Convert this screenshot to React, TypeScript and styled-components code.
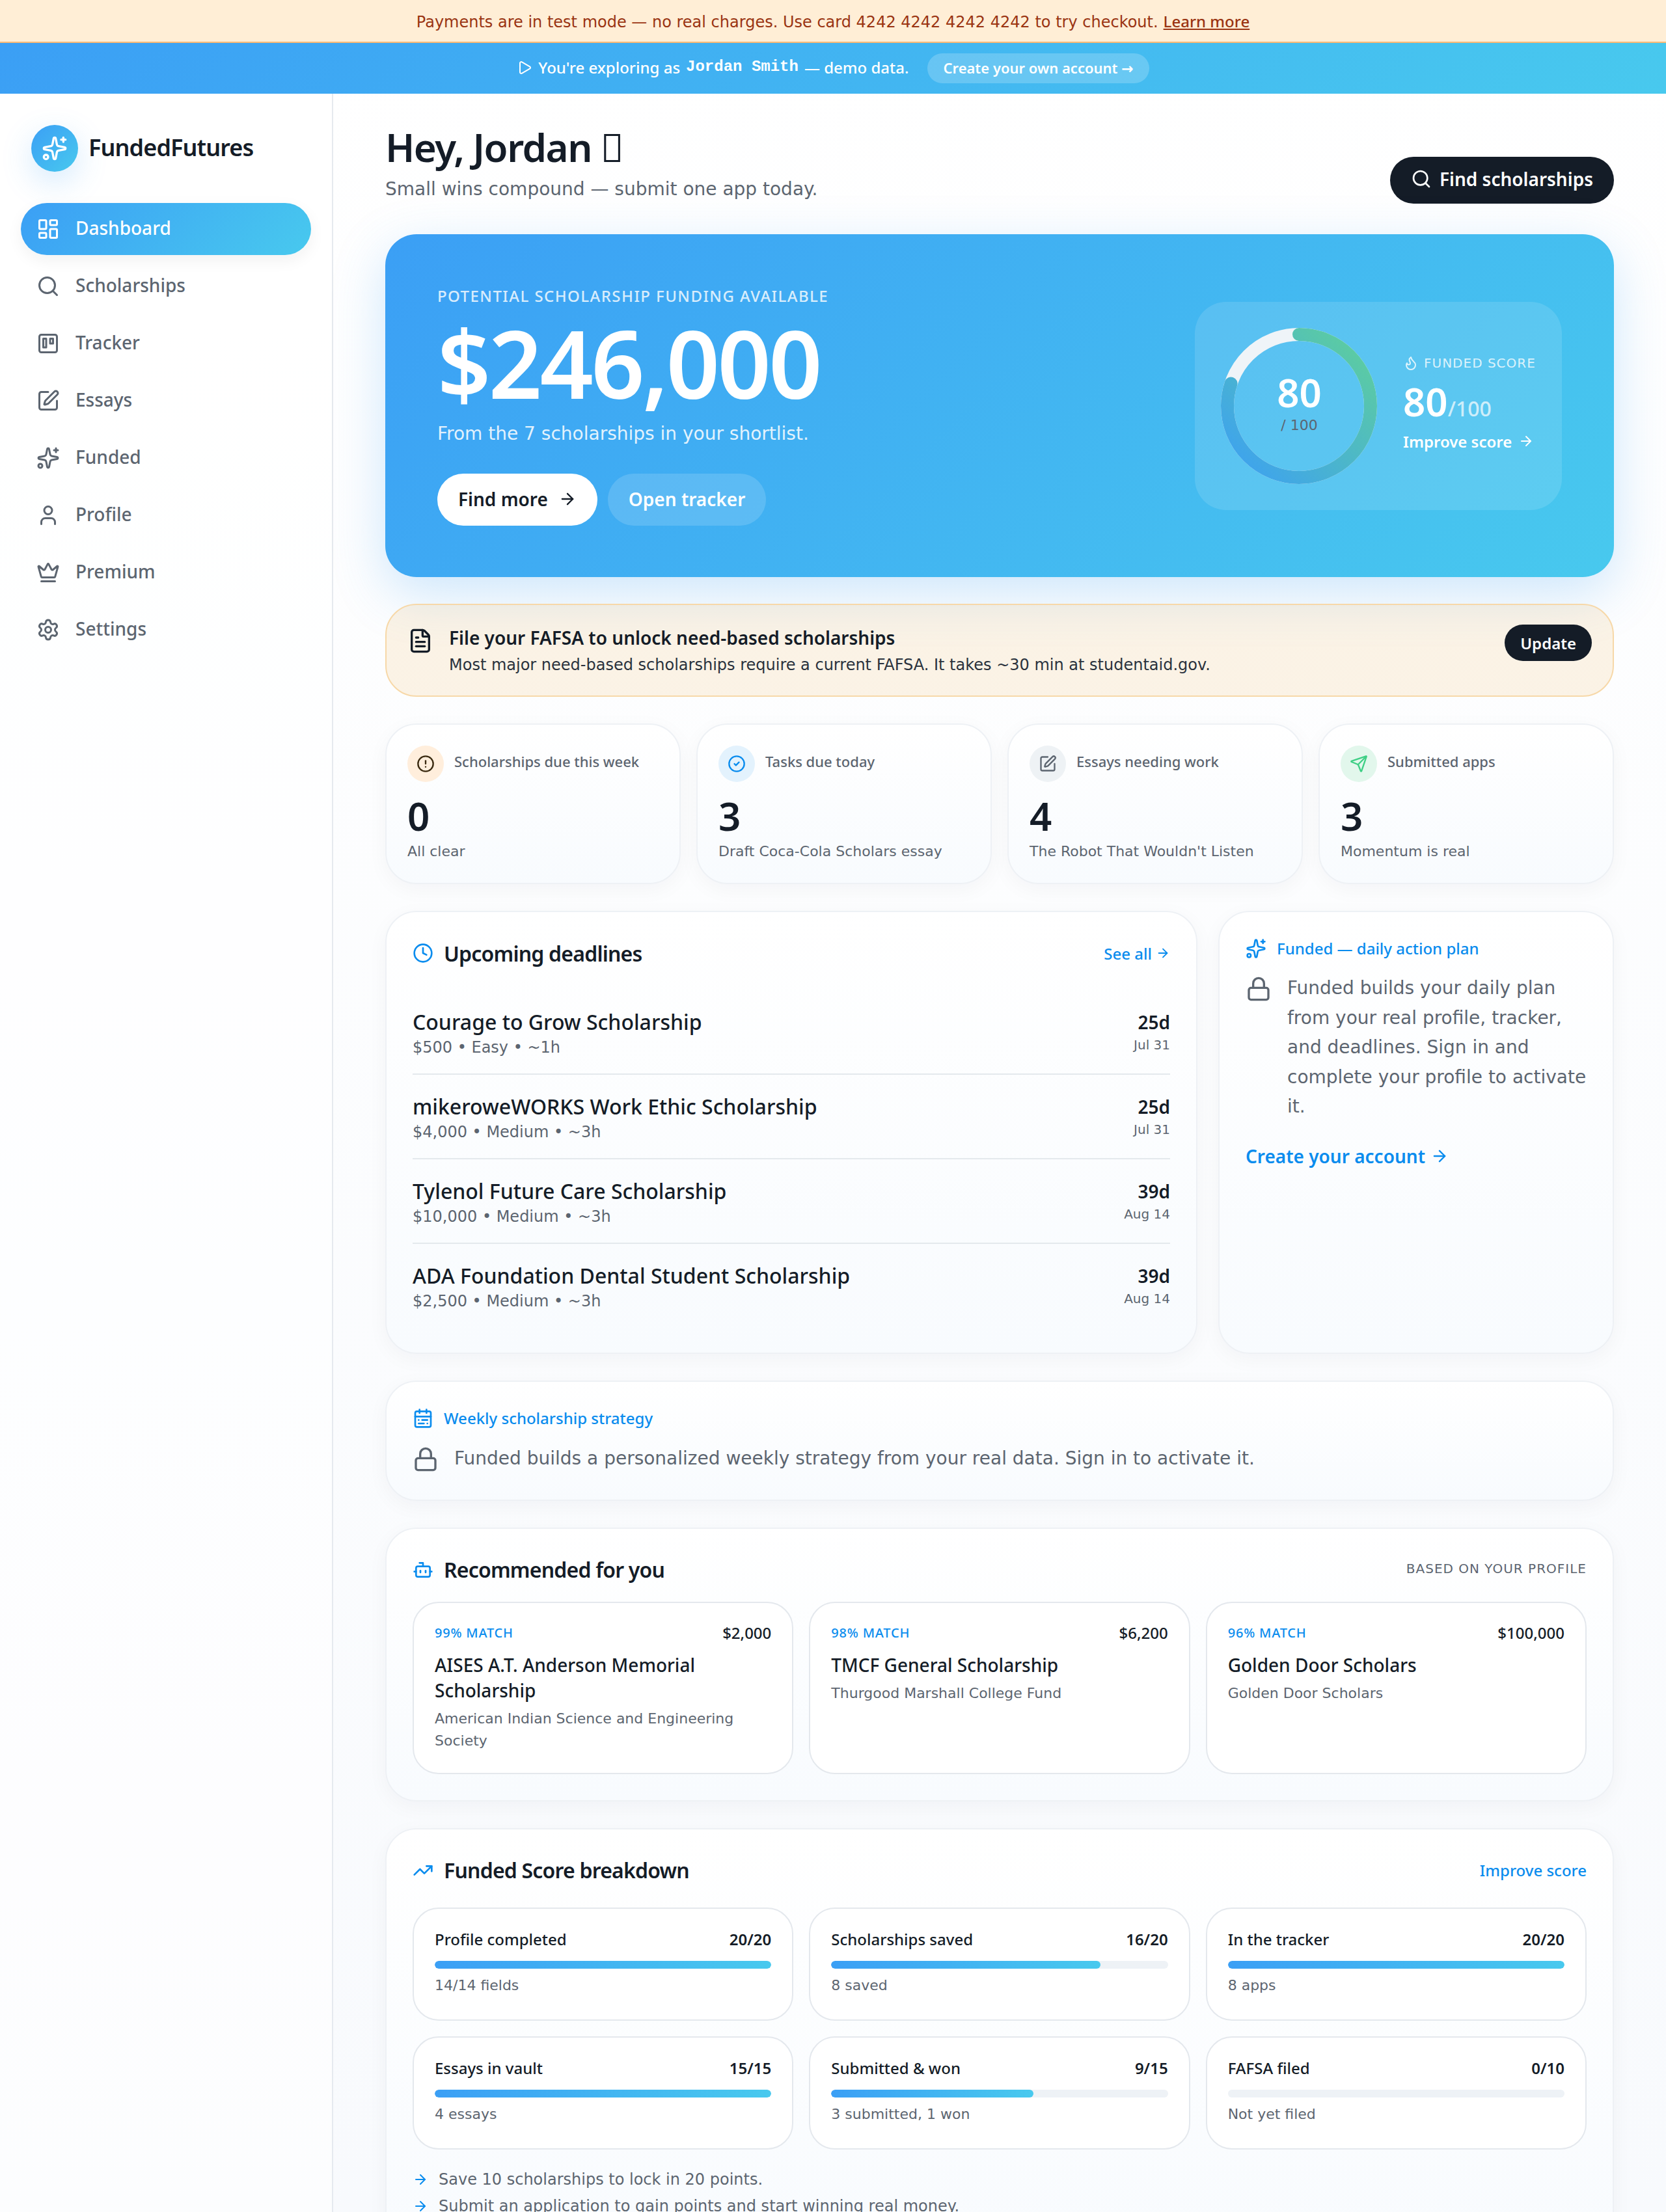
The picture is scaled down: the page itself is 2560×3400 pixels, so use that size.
import React from "react";
import styled, { createGlobalStyle } from "styled-components";
import {
  ArrowRight, Bot, CalendarRange, CircleAlert, CircleCheck, Clock, Crown, FileText, Flame,
  LayoutDashboard, Lock, Play, Search, Send, Settings, Sparkles, SquarePen, Trello,
  TrendingUp, User,
} from "lucide-react";

const ACCENT = "#0a8cee";
const INK = "#141c27";
const MUTED = "#5c6570";
const BRAND = "linear-gradient(135deg,#3b9ff5,#48c9ee)";
const TEXT = `"DejaVu Sans", sans-serif`;
const UI = `"Noto Sans", "DejaVu Sans", sans-serif`;

const Global = createGlobalStyle`
  html, body { margin: 0; padding: 0; background: #fff; }
  body { font-family: ${TEXT}; color: ${INK}; }
  * { box-sizing: border-box; }
`;

const Shell = styled.div`
  height: 3400px;
  overflow: hidden;
  display: flex;
  flex-direction: column;
  background: linear-gradient(180deg, #ffffff 0%, #f8fafd 100%);
`;
const TestBanner = styled.div`
  height: 66px;
  flex: none;
  background: #ffeed6;
  border-bottom: 2px solid #fdba74;
  color: #9a3412;
  font-size: 24px;
  display: flex;
  align-items: center;
  justify-content: center;
  a { font-family: ${UI}; color: inherit; text-decoration: underline; font-weight: 500; margin-left: 8px; }
`;
const DemoBar = styled.div`
  height: 78px;
  flex: none;
  background: ${BRAND};
  color: #fff;
  font-family: ${UI};
  font-weight: 500;
  font-size: 24px;
  display: flex;
  align-items: center;
  justify-content: center;
  gap: 9px;
  padding-bottom: 3px;
`;
const DemoName = styled.span`
  font-family: "Liberation Mono", monospace;
  font-weight: 700;
  font-size: 24px;
  margin: 0 0 2px;
`;
const DemoPill = styled.span`
  height: 46px;
  padding: 0 24px 2px;
  margin: 3px 0 0 20px;
  border-radius: 23px;
  background: rgba(255, 255, 255, 0.2);
  font-size: 22px;
  font-weight: 600;
  display: inline-flex;
  align-items: center;
`;
const Body = styled.div`
  flex: 1;
  display: flex;
  min-height: 0;
`;
const Sidebar = styled.aside`
  width: 512px;
  flex: none;
  border-right: 2px solid #e6eaef;
  padding: 48px 32px;
  background: rgba(255, 255, 255, 0.6);
`;
const Brand = styled.div`
  display: flex;
  align-items: center;
  gap: 16px;
  padding-left: 16px;
  margin-bottom: 48px;
  font-family: ${UI};
  font-size: 36px;
  font-weight: 600;
  letter-spacing: -0.025em;
  span:last-child { margin-top: -4px; }
`;
const BrandMark = styled.span`
  width: 72px;
  height: 72px;
  border-radius: 50%;
  background: ${BRAND};
  color: #fff;
  display: flex;
  align-items: center;
  justify-content: center;
  box-shadow: 0 16px 48px rgba(59, 159, 245, 0.22);
`;
const Nav = styled.nav`
  display: flex;
  flex-direction: column;
  gap: 8px;
`;
const NavItem = styled.a<{ $active?: boolean }>`
  height: 80px;
  border-radius: 40px;
  padding: 0 24px;
  display: flex;
  align-items: center;
  gap: 24px;
  font-family: ${UI};
  font-size: 28px;
  font-weight: 500;
  color: ${(p) => (p.$active ? "#fff" : MUTED)};
  background: ${(p) => (p.$active ? BRAND : "transparent")};
  box-shadow: ${(p) => (p.$active ? "0 8px 24px rgba(20,28,39,.06)" : "none")};
  span { margin-top: -4px; }
`;
const Main = styled.main`
  flex: 1;
  min-width: 0;
  padding: 48px 80px 0;
  display: flex;
  flex-direction: column;
  gap: 41px;
`;
const Header = styled.header`
  display: flex;
  justify-content: space-between;
  align-items: flex-end;
  margin-bottom: 6px;
`;
const Title = styled.h1`
  margin: -2px 0 0;
  font-family: ${UI};
  font-size: 60px;
  line-height: 72px;
  font-weight: 600;
  letter-spacing: -0.025em;
`;
const Subtitle = styled.p`
  margin: 7px 0 0;
  font-size: 28px;
  line-height: 44px;
  color: ${MUTED};
`;
const DarkButton = styled.button`
  height: 72px;
  padding: 0 32px 5px;
  border: 0;
  border-radius: 36px;
  background: ${INK};
  color: #fff;
  font: 600 28px ${UI};
  display: flex;
  align-items: center;
  gap: 12px;
`;
const Hero = styled.section`
  height: 527px;
  flex: none;
  border-radius: 48px;
  background: ${BRAND};
  padding: 0 80px;
  color: #fff;
  display: flex;
  justify-content: space-between;
  align-items: center;
  box-shadow: 0 24px 80px rgba(59, 159, 245, 0.25);
`;
const HeroLeft = styled.div`
  display: flex;
  flex-direction: column;
  align-items: flex-start;
`;
const HeroLabel = styled.div`
  font-family: ${UI};
  font-weight: 500;
  font-size: 24px;
  line-height: 32px;
  letter-spacing: 0.06em;
  text-transform: uppercase;
  opacity: 0.8;
`;
const HeroAmount = styled.div`
  font-family: ${UI};
  font-size: 144px;
  line-height: 160px;
  font-weight: 600;
  letter-spacing: -0.025em;
  margin-top: 6px;
`;
const HeroSub = styled.div`
  font-size: 28px;
  line-height: 44px;
  opacity: 0.85;
  margin-top: 8px;
`;
const HeroActions = styled.div`
  display: flex;
  gap: 16px;
  margin-top: 39px;
`;
const HeroButton = styled.button<{ $solid?: boolean }>`
  height: 80px;
  padding: 0 32px 3px;
  border: 0;
  border-radius: 40px;
  font: 600 28px ${UI};
  display: flex;
  align-items: center;
  gap: 16px;
  background: ${(p) => (p.$solid ? "#fff" : "rgba(255,255,255,.15)")};
  color: ${(p) => (p.$solid ? INK : "#fff")};
`;
const ScorePanel = styled.div`
  width: 564px;
  height: 320px;
  border-radius: 48px;
  background: rgba(255, 255, 255, 0.12);
  padding: 40px;
  display: flex;
  align-items: center;
  gap: 40px;
`;
const Ring = styled.div`
  position: relative;
  width: 240px;
  height: 240px;
  flex: none;
  svg { transform: rotate(-90deg); display: block; }
`;
const RingCenter = styled.div`
  position: absolute;
  inset: 0;
  padding: 0 0 12px 1px;
  display: flex;
  flex-direction: column;
  align-items: center;
  justify-content: center;
`;
const RingValue = styled.div`
  font-family: ${UI};
  font-size: 60px;
  line-height: 72px;
  font-weight: 600;
`;
const RingMax = styled.div`
  font-size: 22px;
  line-height: 30px;
  color: ${MUTED};
`;
const ScoreLabel = styled.div`
  font-size: 20px;
  line-height: 30px;
  letter-spacing: 0.05em;
  color: rgba(255, 255, 255, 0.8);
  display: flex;
  align-items: center;
  gap: 8px;
  white-space: nowrap;
`;
const ScoreValue = styled.div`
  font-family: ${UI};
  font-size: 60px;
  line-height: 76px;
  font-weight: 600;
  margin-top: 6px;
  white-space: nowrap;
  span { font-size: 32px; font-weight: 500; opacity: 0.7; }
`;
const ScoreLink = styled.div`
  font-family: ${UI};
  font-size: 24px;
  font-weight: 600;
  margin: -4px 0 10px;
  display: flex;
  align-items: center;
  gap: 10px;
  white-space: nowrap;
`;
const Alert = styled.section`
  height: 143px;
  flex: none;
  border: 2px solid #f7d8a8;
  border-radius: 48px;
  background: rgba(238, 180, 80, 0.14);
  padding: 30px 32px 0 32px;
  display: flex;
  align-items: flex-start;
  gap: 24px;
  svg { margin-top: 5px; flex: none; }
`;
const AlertText = styled.div`
  flex: 1;
`;
const AlertTitle = styled.div`
  font-family: ${UI};
  font-size: 28px;
  line-height: 40px;
  font-weight: 600;
`;
const AlertBody = styled.div`
  font-size: 24px;
  line-height: 36px;
  margin-top: 4px;
  color: #2a323d;
`;
const SmallDark = styled.button`
  height: 56px;
  padding: 0 24px;
  border: 0;
  border-radius: 28px;
  background: ${INK};
  color: #fff;
  font: 600 24px ${UI};
`;
const Card = styled.section<{ $pad?: number }>`
  border: 2px solid #eef1f5;
  border-radius: 48px;
  background: linear-gradient(180deg, #ffffff, #f8fbfe);
  box-shadow: 0 8px 32px rgba(20, 28, 39, 0.04);
  padding: ${(p) => p.$pad ?? 40}px;
`;
const StatGrid = styled.div`
  display: grid;
  grid-template-columns: repeat(4, 1fr);
  gap: 24px;
`;
const StatHead = styled.div`
  display: flex;
  align-items: center;
  gap: 16px;
  font-family: ${UI};
  font-weight: 500;
  font-size: 22px;
  color: ${MUTED};
  span:last-child { margin-top: -8px; }
`;
const StatIcon = styled.span<{ $bg: string; $fg: string }>`
  width: 56px;
  height: 56px;
  border-radius: 50%;
  background: ${(p) => p.$bg};
  color: ${(p) => p.$fg};
  display: flex;
  align-items: center;
  justify-content: center;
  flex: none;
`;
const StatValue = styled.div`
  font-family: ${UI};
  font-size: 60px;
  line-height: 76px;
  font-weight: 600;
  margin-top: 14px;
`;
const StatSub = styled.div`
  font-size: 22px;
  line-height: 33px;
  color: ${MUTED};
  white-space: nowrap;
`;
const TwoCol = styled.div`
  display: grid;
  grid-template-columns: 1248px 1fr;
  gap: 32px;
`;
const CardHead = styled.div<{ $gap?: number }>`
  display: flex;
  align-items: center;
  justify-content: space-between;
  height: 46px;
  margin-bottom: ${(p) => p.$gap ?? 34}px;
`;
const CardTitle = styled.h2`
  margin: 0;
  display: flex;
  align-items: center;
  gap: 16px;
  font-family: ${UI};
  font-size: 32px;
  font-weight: 600;
  letter-spacing: -0.025em;
  color: ${INK};
  svg { color: ${ACCENT}; }
`;
const AccentLink = styled.a<{ $size?: number; $weight?: number }>`
  color: ${ACCENT};
  font-family: ${UI};
  font-size: ${(p) => p.$size ?? 24}px;
  font-weight: ${(p) => p.$weight ?? 500};
  display: inline-flex;
  align-items: center;
  gap: 6px;
`;
const DeadlineRow = styled.div<{ $last?: boolean }>`
  height: ${(p) => (p.$last ? 127 : 130)}px;
  display: flex;
  align-items: center;
  justify-content: space-between;
  border-bottom: ${(p) => (p.$last ? "0" : "2px solid #e4e9ed")};
`;
const DeadlineInfo = styled.div`
  padding-top: 4px;
`;
const DeadlineName = styled.div`
  font-family: ${UI};
  font-size: 32px;
  line-height: 44px;
  font-weight: 500;
`;
const DeadlineMeta = styled.div`
  font-size: 24px;
  line-height: 34px;
  color: ${MUTED};
`;
const DeadlineRight = styled.div`
  text-align: right;
`;
const DeadlineDays = styled.div`
  font-family: ${UI};
  font-size: 28px;
  line-height: 40px;
  font-weight: 600;
`;
const DeadlineDate = styled.div`
  font-size: 20px;
  line-height: 30px;
  color: ${MUTED};
`;
const Eyebrow = styled.div`
  display: flex;
  align-items: center;
  gap: 16px;
  font-family: ${UI};
  color: ${ACCENT};
  font-size: 24px;
  line-height: 32px;
  font-weight: 500;
`;
const LockRow = styled.div`
  display: flex;
  align-items: flex-start;
  gap: 24px;
  margin-top: 22px;
  font-size: 28px;
  line-height: 45.5px;
  color: ${MUTED};
  svg { flex: none; margin-top: 4px; }
`;
const WeeklyLockRow = styled(LockRow)`
  margin-top: 23px;
`;
const PlanLink = styled(AccentLink)`
  margin-top: 34px;
  gap: 8px;
`;
const ThreeGrid = styled.div`
  display: grid;
  grid-template-columns: repeat(3, 1fr);
  gap: 24px;
`;
const Tag = styled.span`
  font-size: 20px;
  letter-spacing: 0.05em;
  color: ${MUTED};
  margin-bottom: 4px;
`;
const InnerCard = styled.div`
  border: 2px solid #e4e8ed;
  border-radius: 40px;
  background: #fff;
  padding: 32px;
`;
const RecTop = styled.div`
  display: flex;
  align-items: center;
  justify-content: space-between;
  height: 28px;
  margin-bottom: 16px;
`;
const Match = styled.span`
  font-family: ${UI};
  font-size: 20px;
  font-weight: 500;
  letter-spacing: 0.04em;
  color: ${ACCENT};
`;
const RecAmount = styled.span`
  font-family: ${UI};
  font-size: 24px;
  font-weight: 500;
`;
const RecName = styled.div`
  font-family: ${UI};
  font-size: 28px;
  line-height: 39px;
  font-weight: 500;
`;
const RecOrg = styled.div`
  font-size: 22px;
  line-height: 34px;
  color: ${MUTED};
  margin-top: 7px;
`;
const MetricTop = styled.div`
  display: flex;
  justify-content: space-between;
  margin-top: -2px;
  font-family: ${UI};
  font-size: 24px;
  line-height: 34px;
  font-weight: 500;
  b { font-weight: 600; }
`;
const Track = styled.div`
  height: 12px;
  border-radius: 6px;
  background: #eef2f6;
  margin: 16px 0 10px;
  overflow: hidden;
`;
const Fill = styled.div`
  height: 100%;
  border-radius: 6px;
  background: linear-gradient(90deg, #3b9ff5, #48c9ee);
`;
const MetricSub = styled.div`
  font-size: 22px;
  line-height: 32px;
  padding-bottom: 4px;
  color: ${MUTED};
`;
const Tips = styled.ul`
  list-style: none;
  margin: 26px 0 0;
  padding: 0;
`;
const Tip = styled.li`
  display: flex;
  align-items: center;
  gap: 16px;
  font-size: 24px;
  line-height: 41px;
  color: ${MUTED};
  svg { color: ${ACCENT}; flex: none; }
`;

const nav = [
  ["Dashboard", LayoutDashboard], ["Scholarships", Search], ["Tracker", Trello], ["Essays", SquarePen],
  ["Funded", Sparkles], ["Profile", User], ["Premium", Crown], ["Settings", Settings],
] as const;
const stats = [
  { label: "Scholarships due this week", v: "0", sub: "All clear", Icon: CircleAlert, bg: "#ffeedc", fg: "#3a2a10" },
  { label: "Tasks due today", v: "3", sub: "Draft Coca-Cola Scholars essay", Icon: CircleCheck, bg: "#e3f2fd", fg: ACCENT },
  { label: "Essays needing work", v: "4", sub: "The Robot That Wouldn't Listen", Icon: SquarePen, bg: "#eef2f5", fg: MUTED },
  { label: "Submitted apps", v: "3", sub: "Momentum is real", Icon: Send, bg: "#e2f7ec", fg: "#3ecf85" },
];
const deadlines = [
  ["Courage to Grow Scholarship", "$500 • Easy • ~1h", "25d", "Jul 31"],
  ["mikeroweWORKS Work Ethic Scholarship", "$4,000 • Medium • ~3h", "25d", "Jul 31"],
  ["Tylenol Future Care Scholarship", "$10,000 • Medium • ~3h", "39d", "Aug 14"],
  ["ADA Foundation Dental Student Scholarship", "$2,500 • Medium • ~3h", "39d", "Aug 14"],
];
const recs = [
  ["99% MATCH", "$2,000", "AISES A.T. Anderson Memorial Scholarship", "American Indian Science and Engineering Society"],
  ["98% MATCH", "$6,200", "TMCF General Scholarship", "Thurgood Marshall College Fund"],
  ["96% MATCH", "$100,000", "Golden Door Scholars", "Golden Door Scholars"],
];
const metrics: [string, string, number, string][] = [
  ["Profile completed", "20/20", 100, "14/14 fields"],
  ["Scholarships saved", "16/20", 80, "8 saved"],
  ["In the tracker", "20/20", 100, "8 apps"],
  ["Essays in vault", "15/15", 100, "4 essays"],
  ["Submitted & won", "9/15", 60, "3 submitted, 1 won"],
  ["FAFSA filed", "0/10", 0, "Not yet filed"],
];

const C = 2 * Math.PI * 110;

export default function App() {
  return (
    <Shell>
      <Global />
      <TestBanner>
        <span>Payments are in test mode — no real charges. Use card 4242 4242 4242 4242 to try checkout.<a>Learn more</a></span>
      </TestBanner>
      <DemoBar>
        <Play size={24} />
        <span>You're exploring as</span>
        <DemoName>Jordan Smith</DemoName>
        <span>— demo data.</span>
        <DemoPill>Create your own account →</DemoPill>
      </DemoBar>
      <Body>
        <Sidebar>
          <Brand>
            <BrandMark><Sparkles size={40} /></BrandMark>
            <span>FundedFutures</span>
          </Brand>
          <Nav>
            {nav.map(([label, Icon], i) => (
              <NavItem key={label} $active={i === 0}>
                <Icon size={36} />
                <span>{label}</span>
              </NavItem>
            ))}
          </Nav>
        </Sidebar>
        <Main>
          <Header>
            <div>
              <Title>Hey, Jordan {"\u{F0000}"}</Title>
              <Subtitle>Small wins compound — submit one app today.</Subtitle>
            </div>
            <DarkButton><Search size={32} />Find scholarships</DarkButton>
          </Header>
          <Hero>
            <HeroLeft>
              <HeroLabel>Potential scholarship funding available</HeroLabel>
              <HeroAmount>$246,000</HeroAmount>
              <HeroSub>From the 7 scholarships in your shortlist.</HeroSub>
              <HeroActions>
                <HeroButton $solid>Find more <ArrowRight size={28} /></HeroButton>
                <HeroButton>Open tracker</HeroButton>
              </HeroActions>
            </HeroLeft>
            <ScorePanel>
              <Ring>
                <svg width="240" height="240" viewBox="0 0 240 240">
                  <defs>
                    <linearGradient id="ring" x1="0" y1="0" x2="1" y2="1">
                      <stop offset="0" stopColor="#3b9ff5" />
                      <stop offset="1" stopColor="#5fd09a" />
                    </linearGradient>
                  </defs>
                  <circle cx="120" cy="120" r="110" fill="none" stroke="#eff4f8" strokeWidth="20" />
                  <circle cx="120" cy="120" r="110" fill="none" stroke="url(#ring)" strokeWidth="20" strokeLinecap="round" strokeDasharray={`${C * 0.8} ${C}`} />
                </svg>
                <RingCenter>
                  <RingValue>80</RingValue>
                  <RingMax>/ 100</RingMax>
                </RingCenter>
              </Ring>
              <div>
                <ScoreLabel><Flame size={24} />FUNDED SCORE</ScoreLabel>
                <ScoreValue>80<span>/100</span></ScoreValue>
                <ScoreLink>Improve score <ArrowRight size={24} /></ScoreLink>
              </div>
            </ScorePanel>
          </Hero>
          <Alert>
            <FileText size={40} />
            <AlertText>
              <AlertTitle>File your FAFSA to unlock need-based scholarships</AlertTitle>
              <AlertBody>Most major need-based scholarships require a current FAFSA. It takes ~30 min at studentaid.gov.</AlertBody>
            </AlertText>
            <SmallDark>Update</SmallDark>
          </Alert>
          <StatGrid>
            {stats.map((s) => (
              <Card $pad={32} key={s.label}>
                <StatHead>
                  <StatIcon $bg={s.bg} $fg={s.fg}><s.Icon size={28} /></StatIcon>
                  <span>{s.label}</span>
                </StatHead>
                <StatValue>{s.v}</StatValue>
                <StatSub>{s.sub}</StatSub>
              </Card>
            ))}
          </StatGrid>
          <TwoCol>
            <Card>
              <CardHead>
                <CardTitle><Clock size={32} />Upcoming deadlines</CardTitle>
                <AccentLink>See all <ArrowRight size={22} /></AccentLink>
              </CardHead>
              {deadlines.map((d, i) => (
                <DeadlineRow key={d[0]} $last={i === 3}>
                  <DeadlineInfo>
                    <DeadlineName>{d[0]}</DeadlineName>
                    <DeadlineMeta>{d[1]}</DeadlineMeta>
                  </DeadlineInfo>
                  <DeadlineRight>
                    <DeadlineDays>{d[2]}</DeadlineDays>
                    <DeadlineDate>{d[3]}</DeadlineDate>
                  </DeadlineRight>
                </DeadlineRow>
              ))}
            </Card>
            <Card>
              <Eyebrow><Sparkles size={32} />Funded — daily action plan</Eyebrow>
              <LockRow>
                <Lock size={40} />
                <span>Funded builds your daily plan from your real profile, tracker, and deadlines. Sign in and complete your profile to activate it.</span>
              </LockRow>
              <PlanLink $size={28} $weight={600}>Create your account <ArrowRight size={28} /></PlanLink>
            </Card>
          </TwoCol>
          <Card>
            <Eyebrow><CalendarRange size={32} />Weekly scholarship strategy</Eyebrow>
            <WeeklyLockRow>
              <Lock size={40} />
              <span>Funded builds a personalized weekly strategy from your real data. Sign in to activate it.</span>
            </WeeklyLockRow>
          </Card>
          <Card>
            <CardHead $gap={26}>
              <CardTitle><Bot size={32} />Recommended for you</CardTitle>
              <Tag>BASED ON YOUR PROFILE</Tag>
            </CardHead>
            <ThreeGrid>
              {recs.map((r) => (
                <InnerCard key={r[0]}>
                  <RecTop><Match>{r[0]}</Match><RecAmount>{r[1]}</RecAmount></RecTop>
                  <RecName>{r[2]}</RecName>
                  <RecOrg>{r[3]}</RecOrg>
                </InnerCard>
              ))}
            </ThreeGrid>
          </Card>
          <Card>
            <CardHead>
              <CardTitle><TrendingUp size={32} />Funded Score breakdown</CardTitle>
              <AccentLink>Improve score</AccentLink>
            </CardHead>
            <ThreeGrid>
              {metrics.map((m) => (
                <InnerCard key={m[0]}>
                  <MetricTop><span>{m[0]}</span><b>{m[1]}</b></MetricTop>
                  <Track><Fill style={{ width: `${m[2]}%` }} /></Track>
                  <MetricSub>{m[3]}</MetricSub>
                </InnerCard>
              ))}
            </ThreeGrid>
            <Tips>
              <Tip><ArrowRight size={24} />Save 10 scholarships to lock in 20 points.</Tip>
              <Tip><ArrowRight size={24} />Submit an application to gain points and start winning real money.</Tip>
            </Tips>
          </Card>
        </Main>
      </Body>
    </Shell>
  );
}
